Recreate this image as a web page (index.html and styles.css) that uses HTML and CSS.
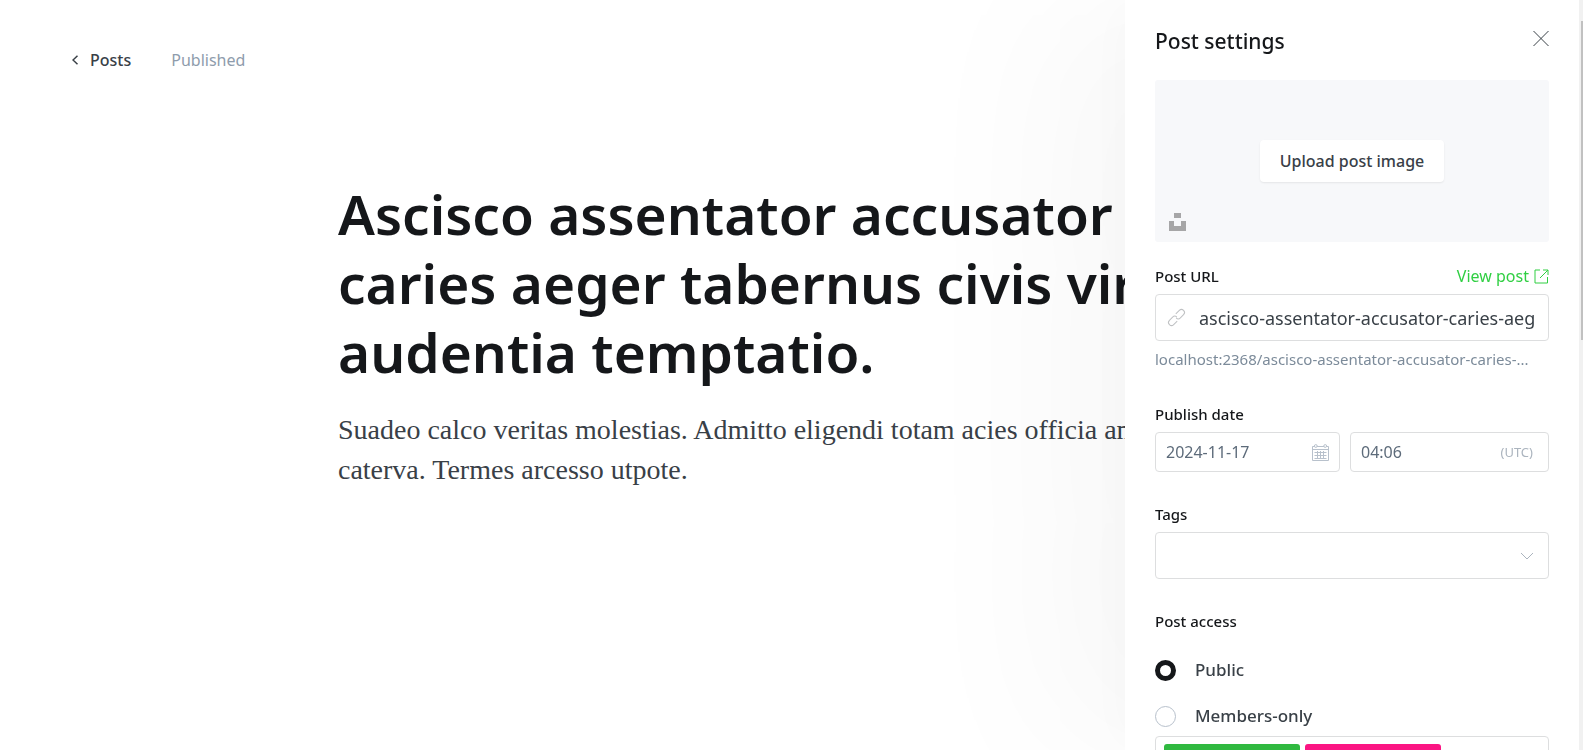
FILE: index.html
```html
<!DOCTYPE html>
<html lang="en">
<head>
<meta charset="utf-8">
<meta name="viewport" content="width=device-width, initial-scale=1">
<title>Post settings</title>
<link rel="stylesheet" href="styles.css">
</head>
<body>
<main class="editor">
  <header class="editor-header">
    <a class="back-link" href="#">
      <svg class="back-icon" width="7" height="10" viewBox="0 0 7 10" aria-hidden="true"><path d="M5.500 .8 1 5 5.500 9.200"/></svg>
      <span>Posts</span>
    </a>
    <span class="status">Published</span>
  </header>
  <article class="post">
    <h1 class="post-title">Ascisco assentator accusator<br>caries aeger tabernus civis vir<br>audentia temptatio.</h1>
    <p class="post-body">Suadeo calco veritas molestias. Admitto eligendi totam acies officia amb<br>caterva. Termes arcesso utpote.</p>
  </article>
</main>

<aside class="panel">
  <form class="settings">
    <div class="settings-header">
      <h2 class="settings-title">Post settings</h2>
      <button class="close" type="button" aria-label="Close">
        <svg width="17" height="17" viewBox="0 0 17 17" aria-hidden="true"><path d="M1.500 1l15 15M16.500 1l-15 15"/></svg>
      </button>
    </div>

    <div class="uploader">
      <button class="upload-button" type="button">Upload post image</button>
      <button class="unsplash" type="button" aria-label="Unsplash">
        <svg width="17" height="18" viewBox="0 0 17 18" aria-hidden="true"><path d="M5 0h7v5H5zM0 8h5v5h7V8h5v10H0z"/></svg>
      </button>
    </div>

    <div class="field">
      <div class="label-row">
        <label class="label" for="url">Post URL</label>
        <a class="view-link" href="#">View post
          <svg width="15" height="15" viewBox="0 0 15 15" aria-hidden="true"><path d="M6 1H1v13h12.500V8M9 1h5v5M14 1 6 9"/></svg>
        </a>
      </div>
      <div class="control">
        <svg class="link-icon" width="17" height="17" viewBox="0 0 17 17" aria-hidden="true"><g transform="rotate(-45 8.500 8.500)"><path d="M6.500 11.500H1.500a3 3 0 0 1 0-6H6a3 3 0 0 1 3 3M10.500 5.500h5a3 3 0 0 1 0 6H11a3 3 0 0 1-3-3"/></g></svg>
        <input class="input url-input" id="url" type="text" value="ascisco-assentator-accusator-caries-aeger-tabernus">
      </div>
      <p class="hint">localhost:2368/ascisco-assentator-accusator-caries-...</p>
    </div>

    <div class="field">
      <label class="label" for="date">Publish date</label>
      <div class="date-row">
        <div class="control control-small">
          <input class="input" id="date" type="text" value="2024-11-17">
          <svg class="calendar" width="17" height="17" viewBox="0 0 17 17" aria-hidden="true"><path d="M5 2.500h7M14.500 2.500h2v14H.5v-14h2M.5 5.500h16M2.500 8.500h12M2.500 11.500h12M2.500 14.500h12M5.500 7v8M8.500 7v8M11.500 7v8"/><circle cx="3.800" cy="2" r="1.400"/><circle cx="13.200" cy="2" r="1.400"/></svg>
        </div>
        <div class="control control-small time-control">
          <input class="input" type="text" value="04:06" aria-label="Publish time">
          <span class="zone">(UTC)</span>
        </div>
      </div>
    </div>

    <div class="field">
      <label class="label" for="tags">Tags</label>
      <div class="control">
        <select class="select" id="tags"><option value=""></option></select>
        <svg class="chevron" width="14" height="8" viewBox="0 0 14 8" aria-hidden="true"><path d="M1 1l6 6 6-6"/></svg>
      </div>
    </div>

    <fieldset class="field access">
      <legend class="label">Post access</legend>
      <div class="radios">
        <label class="radio-row"><input class="radio" type="radio" name="access" checked>Public</label>
        <label class="radio-row"><input class="radio" type="radio" name="access">Members-only</label>
      </div>
      <div class="tiers">
        <span class="tier tier-green"></span>
        <span class="tier tier-pink"></span>
      </div>
    </fieldset>
  </form>
  <div class="scrollbar" aria-hidden="true"><div class="thumb"></div></div>
</aside>
</body>
</html>
```
FILE: styles.css
```css
* { box-sizing: border-box; }

body {
  margin: 0;
  height: 100vh;
  overflow: hidden;
  background: #fff;
  color: #15171a;
  font-family: "Noto Sans", "Open Sans", sans-serif;
}

h1, h2, p { margin: 0; }
a { text-decoration: none; }
svg { fill: none; stroke: currentColor; flex: none; }
button { padding: 0; border: 0; font: inherit; cursor: pointer; }

.editor-header {
  display: flex;
  align-items: center;
  gap: 40px;
  padding: 48px 72px 0;
  font-size: 16px;
  line-height: 24px;
}
.back-link {
  display: flex;
  align-items: center;
  gap: 11px;
  color: #394047;
  font-weight: 500;
}
.back-icon { stroke-width: 1.5; }
.status { color: #8e9cac; }

.post {
  width: 57.3%;
  margin: 107px auto 0;
  white-space: nowrap;
}
.post-title {
  font-size: 55px;
  line-height: 69px;
  font-weight: 600;
}
.post-body {
  margin-top: 24px;
  color: #394047;
  font-family: Georgia, "Liberation Serif", serif;
  font-size: 28px;
  line-height: 40px;
}

.panel {
  position: fixed;
  top: 0;
  right: 0;
  bottom: 0;
  display: flex;
  width: 458px;
  background: #fff;
  box-shadow: 0 0 8px rgba(0, 0, 0, .01), -16px 0 48px rgba(0, 0, 0, .02), -80px 0 160px rgba(0, 0, 0, .03);
}
.settings {
  flex: 1;
  min-width: 0;
  height: 100vh;
  padding: 24px 30px 0;
  overflow: hidden;
}
.scrollbar {
  width: 4px;
  padding: 21px 0 0 2px;
  background: #f1f1f1;
}
.thumb { height: 42.5vh; background: #c1c1c1; }

.settings-header {
  display: flex;
  justify-content: space-between;
  align-items: flex-start;
  height: 56px;
}
.settings-title {
  font-size: 21px;
  line-height: 34px;
  font-weight: 500;
}
.close {
  display: flex;
  padding-top: 6px;
  background: none;
  color: #394047;
}

.uploader {
  position: relative;
  display: flex;
  align-items: center;
  justify-content: center;
  height: 162px;
  border-radius: 3px;
  background: #f7f8fa;
}
.upload-button {
  height: 42px;
  padding: 0 20px;
  border-radius: 4px;
  background: #fff;
  box-shadow: 0 1px 2px rgba(0, 0, 0, .08);
  color: #394047;
  font-size: 16px;
  font-weight: 500;
}
.unsplash {
  position: absolute;
  left: 14px;
  bottom: 11px;
  display: flex;
  background: none;
  color: #a6a6a7;
}
.unsplash svg { fill: currentColor; stroke: none; }

.field { margin-top: 32px; }
.uploader + .field { margin-top: 24px; }
.label-row { display: flex; justify-content: space-between; }
.label {
  display: block;
  padding: 0;
  font-size: 15px;
  line-height: 20px;
  font-weight: 500;
}
.view-link {
  display: flex;
  align-items: center;
  gap: 5px;
  color: #30cf43;
  font-size: 16px;
  line-height: 20px;
}
.control {
  display: flex;
  align-items: center;
  height: 47px;
  margin-top: 8px;
  padding: 0 14px 0 12px;
  border: 1px solid #dddedf;
  border-radius: 4px;
  background: #fff;
}
.control-small { height: 40px; padding: 0 10px; }
.input {
  flex: 1;
  min-width: 0;
  width: 0;
  padding: 0;
  border: 0;
  outline: 0;
  background: none;
  color: #5d6b7a;
  font: inherit;
  font-size: 16px;
}
.url-input { margin-left: 14px; color: #394047; font-size: 18px; }
.link-icon { overflow: visible; color: #bfc1c3; }
.hint {
  margin-top: 6px;
  padding-bottom: 1px;
  color: #7c8b9a;
  font-size: 15px;
  line-height: 24px;
  white-space: nowrap;
}
.date-row {
  display: grid;
  grid-template-columns: 185fr 199fr;
  gap: 10px;
}
.time-control { padding-right: 15px; }
.calendar { color: #b8c1cc; }
.zone { color: #abb4be; font-size: 13px; }
.select {
  flex: 1;
  height: 100%;
  border: 0;
  outline: 0;
  appearance: none;
  background: none;
}
.chevron { color: #abb4be; }

.access { margin-right: 0; margin-left: 0; padding: 0; border: 0; }
.radios {
  display: flex;
  flex-direction: column;
  gap: 22px;
  padding-top: 27px;
}
.radio-row {
  display: flex;
  align-items: center;
  gap: 19px;
  color: #394047;
  font-size: 17px;
  line-height: 24px;
  font-weight: 500;
}
.radio {
  width: 21px;
  height: 21px;
  margin: 0;
  appearance: none;
  border: 1px solid #b8c1cc;
  border-radius: 50%;
  background: #fff;
}
.radio:checked { border: 5px solid #15171a; }
.tiers {
  display: flex;
  gap: 5px;
  margin-top: 8px;
  padding: 7px 8px;
  border: 1px solid #dddedf;
  border-radius: 4px;
}
.tier { width: 136px; height: 30px; border-radius: 3px; }
.tier-green { background: #30b940; }
.tier-pink { background: #fb1583; }
```
